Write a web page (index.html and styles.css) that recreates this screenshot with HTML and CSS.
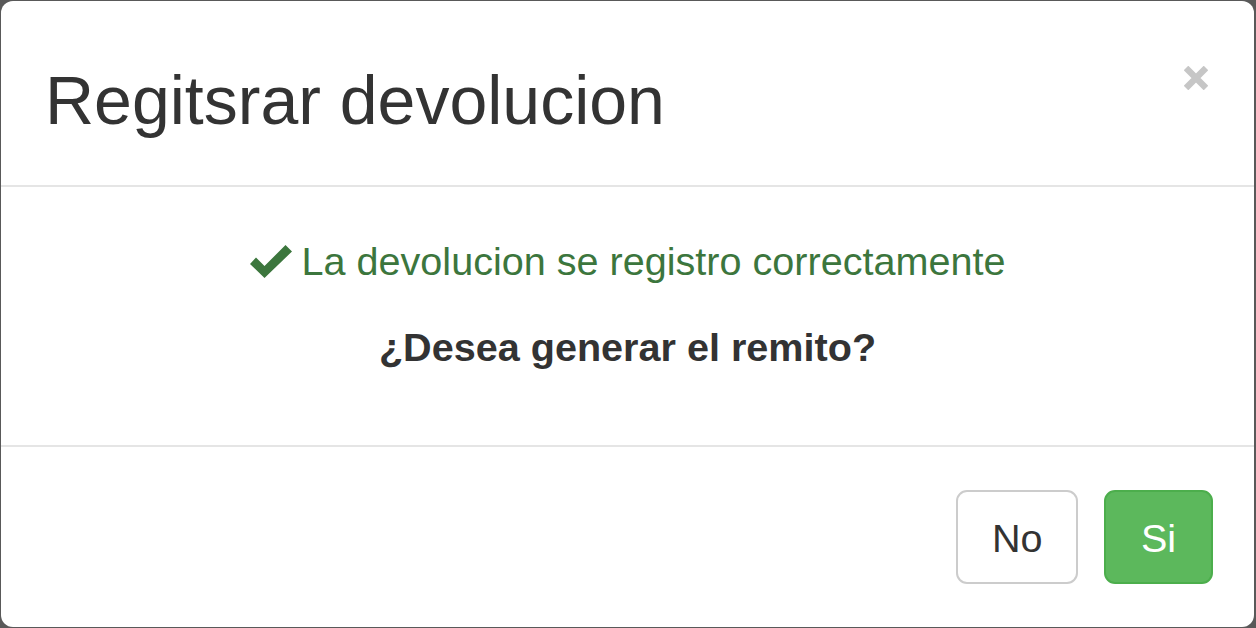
FILE: index.html
```html
<!DOCTYPE html>
<html lang="es">
<head>
<meta charset="utf-8">
<title>Regitsrar devolucion</title>
<link rel="stylesheet" href="styles.css">
</head>
<body>
<div class="modal">
  <div class="modal-header">
    <h3 class="modal-title">Regitsrar devolucion</h3>
    <span class="close" aria-label="Cerrar">
      <svg width="24" height="24" viewBox="0 0 24 24"><path d="M2 2 L22 22 M22 2 L2 22" stroke="#c6c6c6" stroke-width="6.5" fill="none"/></svg>
    </span>
  </div>
  <div class="modal-body">
    <p class="success">
      <svg class="check" width="42" height="34" viewBox="0 0 42 34"><polygon points="0,20 6,13.5 14.5,22 35.5,1 42,7.5 14.5,34" fill="#3c763d"/></svg>La devolucion se registro correctamente
    </p>
    <p class="question">¿Desea generar el remito?</p>
  </div>
  <div class="modal-footer">
    <button class="btn btn-default">No</button>
    <button class="btn btn-success">Si</button>
  </div>
</div>
</body>
</html>
```
FILE: styles.css
```css
html, body {
  margin: 0;
  padding: 0;
  height: 628px;
  overflow: hidden;
}
body {
  background: #595959;
  font-family: "Liberation Sans", Arial, sans-serif;
  color: #333;
}
.modal {
  margin: 1px 2px 0 1px;
  height: 626px;
  background: #fff;
  border-radius: 12px;
  display: flex;
  flex-direction: column;
  box-sizing: border-box;
}
.modal-header {
  height: 186px;
  box-sizing: border-box;
  padding: 60px 46px 0 44px;
  border-bottom: 2px solid #e5e5e5;
  display: flex;
  justify-content: space-between;
  align-items: flex-start;
}
.modal-title {
  margin: 0;
  font-size: 68px;
  line-height: 78px;
  font-weight: normal;
  color: #333;
}
.close {
  display: block;
  width: 24px;
  height: 24px;
  margin-top: 5px;
}
.close svg {
  display: block;
}
.modal-body {
  height: 258px;
  box-sizing: border-box;
  padding: 46px 42px 0;
  text-align: center;
  font-size: 39.6px;
  line-height: 56px;
}
.modal-body p {
  margin: 0;
}
.success {
  color: #3c763d;
  margin-bottom: 30px !important;
}
.check {
  display: inline-block;
  vertical-align: -3px;
  margin-right: 10px;
}
.question {
  font-weight: bold;
  color: #333;
}
.modal-footer {
  flex: 1;
  border-top: 2px solid #e5e5e5;
  display: flex;
  justify-content: flex-end;
  align-items: flex-start;
  gap: 26px;
  padding: 43px 41px 0 0;
}
.btn {
  font-family: "Liberation Sans", Arial, sans-serif;
  font-size: 39.6px;
  line-height: 56px;
  padding: 18px 34px;
  border-radius: 11px;
  border: 2px solid;
  cursor: pointer;
  box-sizing: border-box;
  height: 94px;
}
.btn-default {
  background: #fff;
  border-color: #ccc;
  color: #333;
  width: 122px;
}
.btn-success {
  background: #5cb85c;
  border-color: #4cae4c;
  color: #fff;
  width: 109px;
}
```
